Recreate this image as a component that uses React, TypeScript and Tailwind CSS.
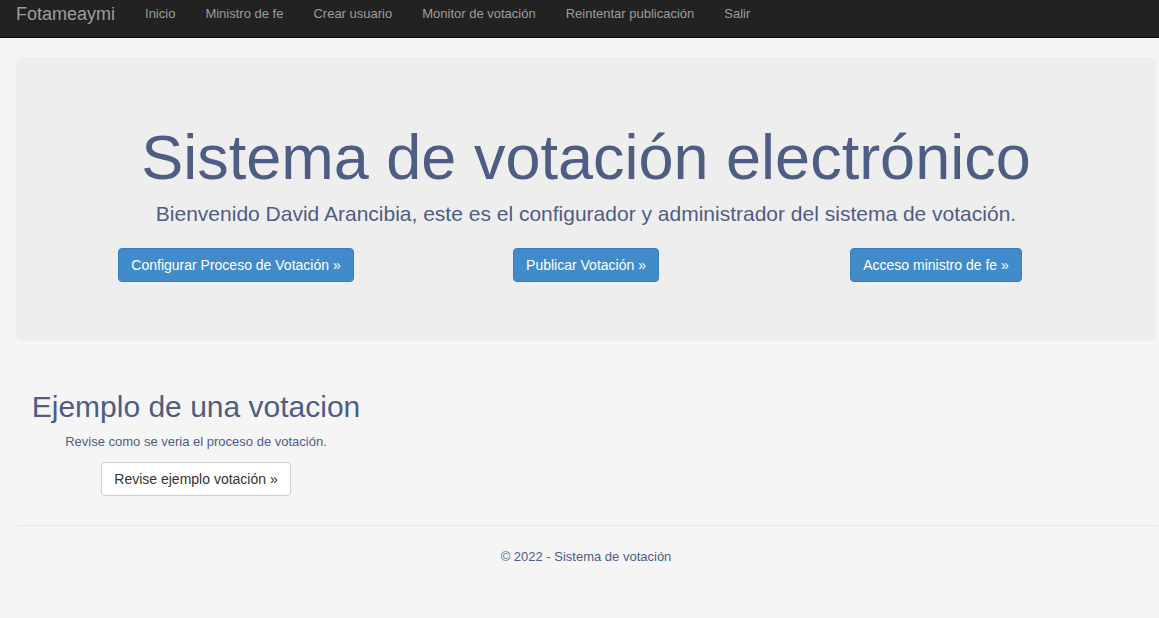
const navLinks = ["Inicio", "Ministro de fe", "Crear usuario", "Monitor de votación", "Reintentar publicación", "Salir"];

const actions = ["Configurar Proceso de Votación »", "Publicar Votación »", "Acceso ministro de fe »"];

export default function App() {
  return (
    <div className="min-h-[618px] bg-[#f5f5f5] font-['Liberation_Sans',Arial,sans-serif] text-[#4e5d84]">
      <nav className="flex h-[38px] items-start border-b border-[#080808] bg-[#222222]">
        <div className="flex items-center pt-[4px]">
          <span className="pl-[16px] pr-[15px] text-[18px] leading-[20px] text-[#9d9d9d]">Fotameaymi</span>
          {navLinks.map((link) => (
            <span key={link} className="px-[15px] text-[13px] leading-[20px] text-[#9d9d9d]">
              {link}
            </span>
          ))}
        </div>
      </nav>

      <main className="px-[16px] pt-[19px]">
        <section className="w-[1140px] rounded-[6px] bg-[#eeeeee] pb-[59px] pt-[65px]">
          <h1 className="text-center text-[63px] leading-[70px] text-[#4e5d84]">Sistema de votación electrónico</h1>
          <p className="mt-[7px] text-center text-[21px] leading-[30px]">
            Bienvenido David Arancibia, este es el configurador y administrador del sistema de votación.
          </p>
          <div className="mx-auto mt-[19px] grid w-[1050px] grid-cols-3">
            {actions.map((label) => (
              <div key={label} className="flex justify-center">
                <button className="h-[34px] rounded-[4px] border border-[#357ebd] bg-[#428bca] px-[12px] text-[14px] text-white">
                  {label}
                </button>
              </div>
            ))}
          </div>
        </section>

        <section className="mt-[49px] flex w-[360px] flex-col items-center">
          <h2 className="text-[30px] leading-[34px]">Ejemplo de una votacion</h2>
          <p className="mt-[10px] text-[13px] leading-[16px]">Revise como se veria el proceso de votación.</p>
          <button className="mt-[12px] h-[34px] rounded-[4px] border border-[#cccccc] bg-white px-[12px] text-[14px] text-[#333333]">
            Revise ejemplo votación »
          </button>
        </section>

        <hr className="ml-[2px] mt-[29px] w-[1140px] border-t border-[#e6e6e6]" />

        <footer className="w-[1140px] pt-[22px] text-center text-[13px] leading-[17px]">© 2022 - Sistema de votación</footer>
      </main>
    </div>
  );
}
